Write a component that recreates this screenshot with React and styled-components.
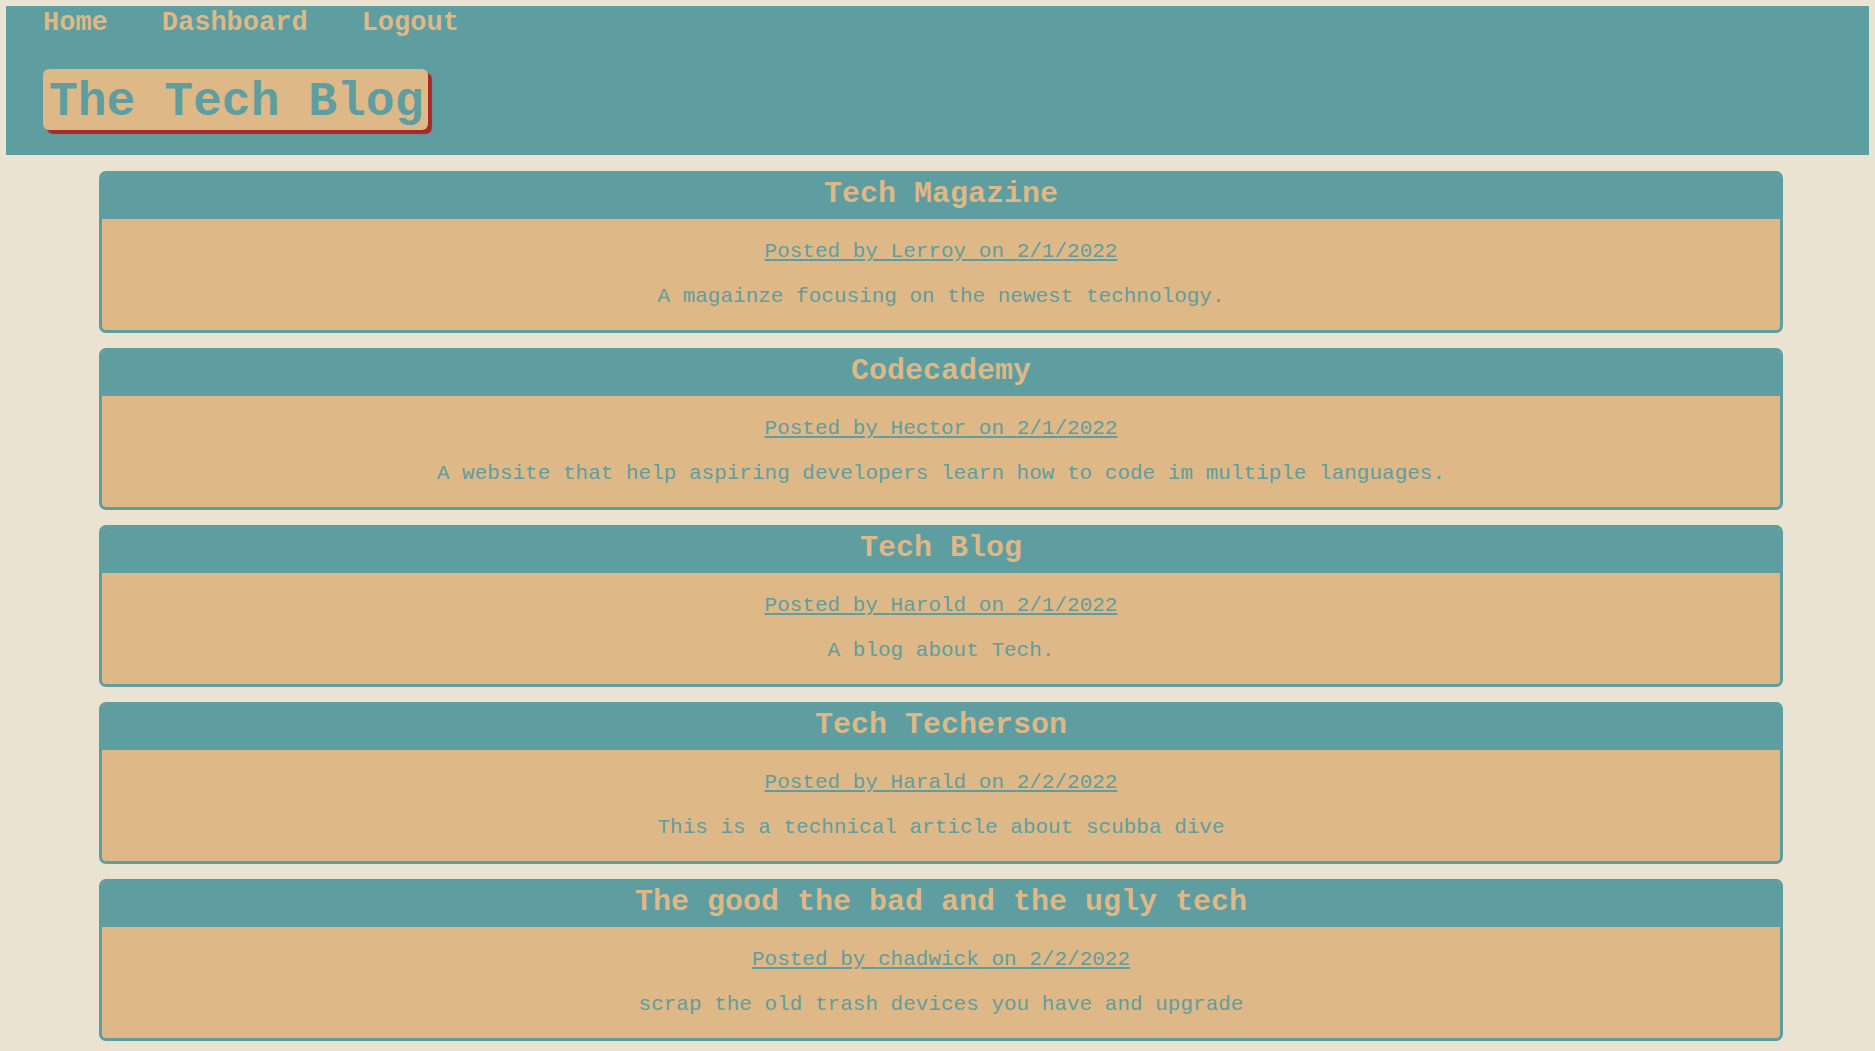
import React from 'react';
import styled, { createGlobalStyle } from 'styled-components';

const GlobalStyle = createGlobalStyle`
  body {
    margin: 6px;
    background-color: #ebe3d2;
    font-family: "Liberation Mono", "Courier New", monospace;
  }
`;

const Header = styled.header`
  background-color: #5f9ea0;
  padding: 2px 37px 25px;
`;

const Nav = styled.nav`
  display: flex;
  gap: 54px;

  a {
    color: #deb887;
    font-size: 27px;
    line-height: 31px;
    font-weight: 700;
    text-decoration: none;
  }
`;

const SiteTitle = styled.h1`
  display: inline-block;
  margin: 30px 0 0;
  padding: 6px 5px 1px 6px;
  font-size: 48px;
  line-height: 54px;
  font-weight: 700;
  color: #5f9ea0;
  background-color: #deb887;
  border-radius: 6px;
  box-shadow: 4px 4px 1px #a52a2a;
`;

const PostList = styled.main`
  display: flex;
  flex-direction: column;
  gap: 15px;
  margin: 16px 86px 0 93px;
`;

const PostCard = styled.article`
  border: 3px solid #5f9ea0;
  border-radius: 7px;
  background-color: #deb887;
  overflow: hidden;
`;

const PostTitle = styled.h2`
  margin: 0;
  padding: 3px 0 8px;
  background-color: #5f9ea0;
  color: #deb887;
  font-size: 30px;
  line-height: 34px;
  font-weight: 700;
  text-align: center;
`;

const PostBody = styled.div`
  display: flow-root;
  text-align: center;
  color: #5f9ea0;
  font-size: 21px;
  line-height: 24px;

  p {
    margin: 21px 0;
  }

  a {
    color: #5f9ea0;
    text-decoration: underline;
  }
`;

const posts = [
  { title: 'Tech Magazine', author: 'Lerroy', date: '2/1/2022', body: 'A magainze focusing on the newest technology.' },
  { title: 'Codecademy', author: 'Hector', date: '2/1/2022', body: 'A website that help aspiring developers learn how to code im multiple languages.' },
  { title: 'Tech Blog', author: 'Harold', date: '2/1/2022', body: 'A blog about Tech.' },
  { title: 'Tech Techerson', author: 'Harald', date: '2/2/2022', body: 'This is a technical article about scubba dive' },
  { title: 'The good the bad and the ugly tech', author: 'chadwick', date: '2/2/2022', body: 'scrap the old trash devices you have and upgrade' },
];

const App = () => {
  return (
    <>
      <GlobalStyle />
      <Header>
        <Nav>
          <a href="#">Home</a>
          <a href="#">Dashboard</a>
          <a href="#">Logout</a>
        </Nav>
        <SiteTitle>The Tech Blog</SiteTitle>
      </Header>
      <PostList>
        {posts.map((post) => (
          <PostCard key={post.title}>
            <PostTitle>{post.title}</PostTitle>
            <PostBody>
              <p>
                <a href="#">Posted by {post.author} on {post.date}</a>
              </p>
              <p>{post.body}</p>
            </PostBody>
          </PostCard>
        ))}
      </PostList>
    </>
  );
};

export default App;
